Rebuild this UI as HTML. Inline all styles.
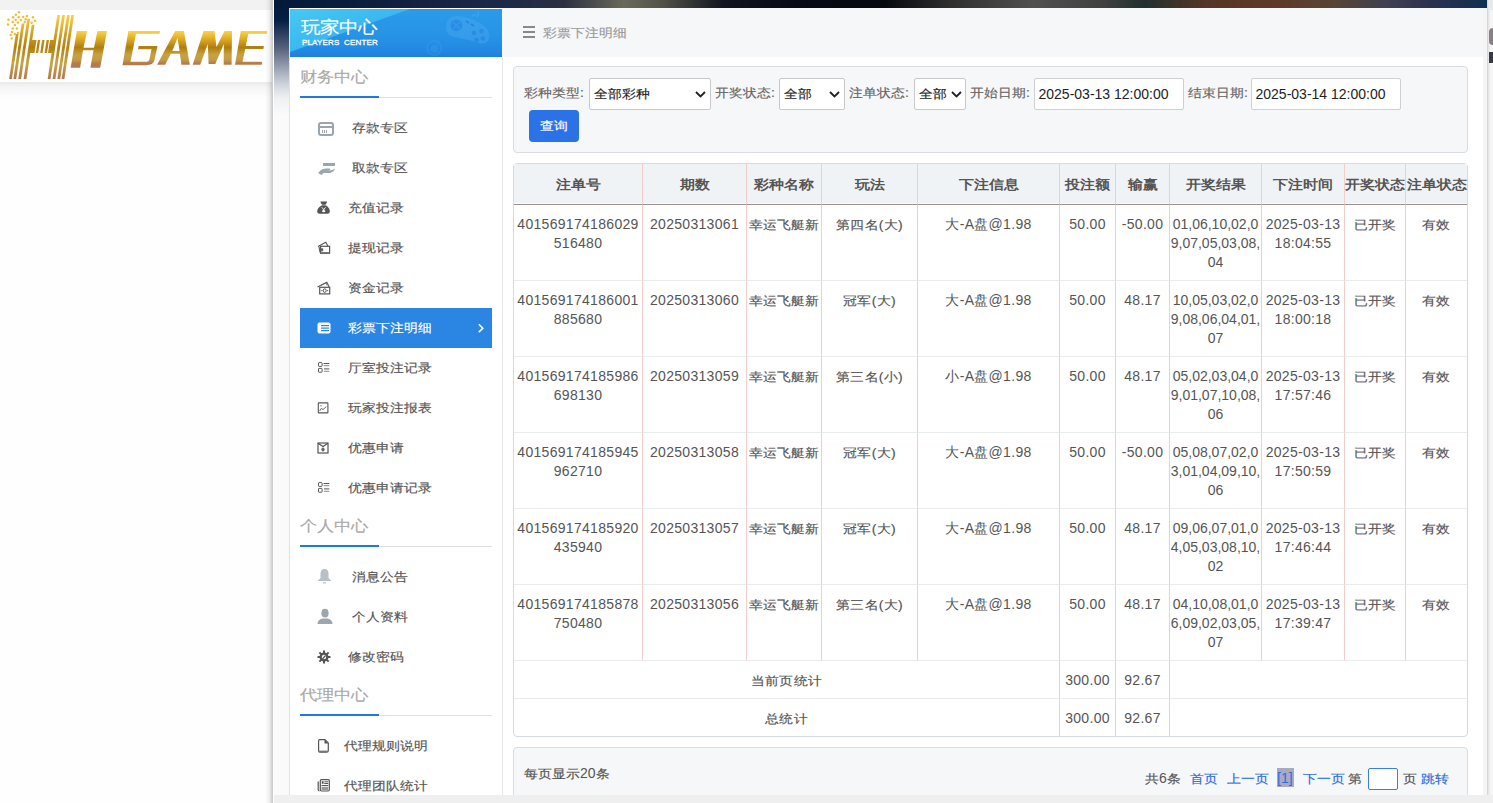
<!DOCTYPE html>
<html><head><meta charset="utf-8">
<style>
*{box-sizing:border-box;margin:0;padding:0}
html,body{width:1493px;height:803px;overflow:hidden}
body{position:relative;background:#fefefe;font-family:"Liberation Sans",sans-serif;font-size:14px;color:#555}
.abs{position:absolute}
#topgrey{left:0;top:0;width:272px;height:10px;background:#f2f2f2}
#logobar{left:0;top:10px;width:272px;height:72px;background:#fff}
#logoshadow{left:0;top:82px;width:272px;height:16px;background:linear-gradient(#eaeaea,#f6f6f6 35%,#fefefe)}
#vshadow{left:265px;top:0;width:8px;height:803px;background:linear-gradient(90deg,rgba(0,0,0,0),rgba(0,0,0,.05) 50%,rgba(0,0,0,.22))}
#vline{left:273px;top:0;width:1px;height:803px;background:#fff}
#frame{left:274px;top:0;width:1213px;height:795px;background:#fafafa}
#frametop{left:274px;top:0;width:1213px;height:140px;background:linear-gradient(#021a3a 0px,#041e44 20px,#56617c 48px,#a0a8b8 70px,#c8ccd5 82px,#dde0e5 90px,#eef0f2 98px,#fafafa 115px)}
#band{left:274px;top:0;width:1213px;height:8px;background:linear-gradient(90deg,#011a38 0px,#142040 130px,#1c2a48 230px,#2a3040 290px,#6a6a5a 350px,#505048 390px,#101520 450px,#050a15 530px,#06090f 610px,#303030 680px,#505050 760px,#404040 830px,#203030 870px,#553525 930px,#5e3a2a 1010px,#574535 1060px,#404050 1110px,#2a3050 1160px,#103050 1214px)}
#bottomstrip{left:274px;top:795px;width:1219px;height:8px;background:#efefef}
#sidebar{left:289px;top:8px;width:214px;height:787px;background:#fff;border-left:1px solid #e2e2e2;border-right:1px solid #e6e9ec}
#sbhead{left:290px;top:9px;width:212px;height:48px;background:linear-gradient(180deg,#2b9be9 0%,#2793e6 55%,#2187e3 90%,#1d7ede 100%)}
#main{left:503px;top:8px;width:984px;height:787px;background:#fff}
#crumb{left:502px;top:8px;width:981px;height:49px;background:#f6f7f9}
#rightstrip{left:1483px;top:8px;width:10px;height:795px;background:#f5f5f5}
#rshadow{left:1487px;top:0;width:3px;height:803px;background:linear-gradient(90deg,#d0d0d0,#e6e6e6,#f3f3f3)}

.sbt{position:absolute;left:300px;font-size:17px;line-height:20px;color:#a9a9a9;white-space:nowrap}
.sbu{position:absolute;left:300px;width:192px;height:2px;border-bottom:1px solid #e0e0e0}
.sbu i{position:absolute;left:0;top:0;width:79px;height:2px;background:#1f7ae0}
.mi{position:absolute;font-size:14px;line-height:20px;color:#555;white-space:nowrap}
.ic{position:absolute}
#active{left:300px;top:308px;width:192px;height:40px;background:#2a86e2}
#sbtitle{left:301px;top:18px;font-size:19px;line-height:20px;color:#fff;white-space:nowrap}
#sbsub{left:302px;top:38px;font-size:8px;-webkit-text-stroke:0.3px #fff;line-height:10px;color:#fff;letter-spacing:0.15px;white-space:pre}

#hamb{left:523px;top:26px;width:12px;height:12px}
#crumbtxt{left:543px;top:23px;font-size:14px;line-height:20px;color:#999;white-space:nowrap}
.panel{position:absolute;left:513px;width:955px;background:#f6f7f9;border:1px solid #d9dde2;border-radius:4px}
.lbl{position:absolute;top:83px;font-size:14px;line-height:20px;color:#666;white-space:nowrap}
.sel{position:absolute;top:78px;height:32px;background:#fff;border:1px solid #c9c9c9;border-radius:2px;font-size:14px;line-height:20px;color:#222;padding:4px 0 0 4px;white-space:nowrap}
.sel svg{position:absolute;right:4px;top:12px}
.inp{position:absolute;top:78px;height:32px;width:150px;background:#fff;border:1px solid #d0d0d0;border-radius:2px;font-size:14px;line-height:20px;color:#222;padding:5px 0 0 3.5px;white-space:nowrap}
#btn{left:529px;top:110px;width:50px;height:32px;background:#2a72e5;border-radius:4px;color:#fff;font-size:14px;line-height:30px;text-align:center}
#tbl{position:absolute;left:513px;top:163px;border-collapse:separate;border-spacing:0;table-layout:fixed;width:955px;border:1px solid #d5dae0;border-radius:4px}
#tbl td,#tbl th{border-right:1px solid #f3cccc;border-bottom:1px solid #e8ecec;text-align:center;vertical-align:top;padding:10px 0 0 0;font-size:14px;line-height:19px;color:#555;font-weight:normal;letter-spacing:0.3px;white-space:nowrap;overflow:hidden}
#tbl th{height:41px;background:#f0f3f6;font-weight:bold;font-size:15px;color:#555;border-bottom:1px solid #9e9090;padding:0;vertical-align:middle;letter-spacing:0;box-shadow:inset 0 -1px 0 #f8fafc}
#tbl tr.r td{height:76px}
#tbl tr.s td{height:38px;padding-top:10px}
#tbl td.l, #tbl th.l{border-right:none}
#tbl tr.last td{border-bottom:none;height:37px}
#pager{top:747px;height:60px}
.pg{position:absolute;top:768px;font-size:14px;line-height:20px;white-space:nowrap;color:#555}
.pg.b{color:#2a6ee0}

.cj{display:inline-block;transform:scaleY(0.87) translateY(0.5px);-webkit-text-stroke:0.18px currentColor}
.mi,.sbt,#crumbtxt,.lbl,#sbtitle{transform:scaleY(0.87);-webkit-text-stroke:0.18px currentColor}
#tbl th .cj{-webkit-text-stroke:0;transform:scaleY(0.87) translateY(-0.8px)}
</style></head><body>
<div id="topgrey" class="abs"></div>
<div id="logobar" class="abs"></div>
<div id="logoshadow" class="abs"></div>
<svg class="abs" style="left:0;top:0" width="272" height="90" viewBox="0 0 272 90">
<defs>
<linearGradient id="gg" x1="0" y1="0" x2="0" y2="1" gradientUnits="objectBoundingBox">
<stop offset="0" stop-color="#fcd44a"/><stop offset="0.5" stop-color="#b3800f"/><stop offset="0.72" stop-color="#c9a444"/><stop offset="0.88" stop-color="#c29b45"/><stop offset="1" stop-color="#b2744e"/>
</linearGradient>
<linearGradient id="gh" x1="0" y1="14" x2="0" y2="80" gradientUnits="userSpaceOnUse">
<stop offset="0" stop-color="#fcd44a"/><stop offset="0.5" stop-color="#b3800f"/><stop offset="0.75" stop-color="#c9a444"/><stop offset="1" stop-color="#b2744e"/>
</linearGradient>
<linearGradient id="gt" x1="0" y1="31" x2="0" y2="66" gradientUnits="userSpaceOnUse"><stop offset="0" stop-color="#fdd345"/><stop offset="0.2" stop-color="#e0b02c"/><stop offset="0.47" stop-color="#b07e0e"/><stop offset="0.68" stop-color="#c7a240"/><stop offset="0.82" stop-color="#c49c44"/><stop offset="0.92" stop-color="#b47c4c"/><stop offset="1" stop-color="#b5784f"/></linearGradient>
</defs>
<g fill="url(#gh)"><polygon points="9.1,79 11.9,79 18.6,34 15.8,34"/><polygon points="13.4,79 16.2,79 24.5,23.5 21.7,23.5"/><polygon points="18.3,79 21.1,79 30.1,18.7 27.3,18.7"/><polygon points="23.6,79 26.4,79 34.5,24.7 31.7,24.7"/><polygon points="47.7,79 50.5,79 60.1,15 57.3,15"/><polygon points="52.6,79 55.4,79 65.0,15 62.2,15"/><polygon points="57.4,79 60.2,79 69.8,15 67.0,15"/><polygon points="61.6,79 64.4,79 74.0,15 71.2,15"/><polygon points="29.5,53 34.5,53 36.5,40 31.4,40"/><polygon points="35.8,53 38.2,53 40.2,40 37.8,40"/><polygon points="40.2,53 42.6,53 44.6,40 42.2,40"/><polygon points="44.6,53 47.0,53 49.0,40 46.6,40"/><polygon points="48.0,53 53.0,53 55.0,40 50.0,40"/></g>
<g fill="#f0bf38"><circle cx="18.9" cy="12.2" r="1.25"/><circle cx="15.9" cy="14.7" r="1.25"/><circle cx="13.2" cy="17.2" r="1.25"/><circle cx="18.7" cy="17.2" r="1.25"/><circle cx="23.2" cy="17" r="1.25"/><circle cx="26.9" cy="16" r="1.25"/><circle cx="32.9" cy="17.2" r="1.25"/><circle cx="8.5" cy="19.7" r="1.25"/><circle cx="15.7" cy="19.7" r="1.25"/><circle cx="20.9" cy="20" r="1.25"/><circle cx="25.7" cy="19.2" r="1.25"/><circle cx="35.1" cy="20.7" r="1.25"/><circle cx="12.7" cy="22" r="1.25"/><circle cx="17.9" cy="22.4" r="1.25"/><circle cx="24.7" cy="22" r="1.25"/><circle cx="31.6" cy="22.7" r="1.25"/><circle cx="8" cy="24.4" r="1.25"/><circle cx="14.9" cy="25" r="1.25"/><circle cx="12.7" cy="28.4" r="1.25"/><circle cx="16.9" cy="28.4" r="1.25"/><circle cx="12" cy="31.9" r="1.25"/><circle cx="17.9" cy="32.9" r="1.25"/><circle cx="10.7" cy="35.1" r="1.25"/><circle cx="14.9" cy="33.9" r="1.25"/><circle cx="11.7" cy="38.6" r="1.25"/></g>
<g fill="url(#gt)">
<polygon points="76.8,31 87.1,31 83.5,47.8 94,47.8 97.4,31 107,31 100.2,67.7 90.4,67.7 93.5,50.2 83,50.2 80.1,67.7 70.7,67.7"/>
<path d="M128.4,31 L160,31 L159.5,33.8 L136,33.8 L130.5,61.8 L147,61.8 Q149,61.8 149.5,59 L151.5,49.3 L138,49.3 L138.6,46 L157.5,46 L154.5,60 Q153.5,65.2 146,65.2 L122.5,65.2 Z"/>
<path d="M175.1,31 L183.9,31 L189.8,64.8 L181.4,64.8 L179.9,53.8 L170.8,53.8 L165.1,64.8 L157.1,64.8 Z M172.3,51 L179.6,51 L177.5,38 Z"/>
<polygon points="203.6,31 214.5,31 216.5,47 224.5,31 232,31 231.6,64.8 223.7,64.8 223.8,44 215.3,64 208.6,64 207.8,44 200.2,64.8 192.7,64.8"/>
<polygon points="240.8,31 267.2,31 266.7,33.8 248.3,33.8 245.8,46 263.9,46 263.4,48.9 245.2,48.9 242.5,61.8 262.2,61.8 261.7,64.8 235,64.8"/>
</g>
</svg>

<div id="vshadow" class="abs"></div>
<div id="vline" class="abs"></div>
<div id="frame" class="abs"></div>
<div id="frametop" class="abs"></div>
<div id="band" class="abs"></div>
<div id="sidebar" class="abs"></div>
<div id="sbhead" class="abs"></div>

<svg class="abs" style="left:290px;top:9px" width="212" height="48" viewBox="290 9 212 48"><defs><linearGradient id="cy" x1="0" y1="0" x2="1" y2="1"><stop offset="0" stop-color="#45c9f3"/><stop offset="1" stop-color="#32a6eb"/></linearGradient></defs><polygon points="290,9 410,9 290,52" fill="url(#cy)"/>
<path d="M446 27 Q446 16 457 16 Q468 16 480 23 Q491 30 489 39 Q487 45 478 43 Q466 39 454 37 Q446 35 446 27 Z" fill="#4fb0f0" opacity="0.35"/>
<circle cx="456.4" cy="25.4" r="5.8" fill="#1f7fe0" opacity="0.55"/>
<path d="M453 22 L460 29 M460 22 L453 29" stroke="#3a9cec" stroke-width="1.5" opacity="0.7"/>
<path d="M466 21 L469 23 M471 24 L474 26" stroke="#1f7fe0" stroke-width="1.5"/>
<g fill="#1f7fe0" opacity="0.5"><circle cx="474" cy="33" r="2.3"/><circle cx="481.5" cy="31" r="2.3"/><circle cx="476.5" cy="40" r="2.3"/><circle cx="483" cy="38.5" r="2.3"/></g>
<path d="M472 17 Q473 13 476 16 Q479 18 478 11" stroke="#4fb0f0" stroke-width="1" fill="none" opacity="0.6"/>
<circle cx="434.3" cy="48" r="7" fill="none" stroke="#4fb0f0" stroke-width="1.5" opacity="0.25"/><circle cx="434.3" cy="49" r="4" fill="#4fb0f0" opacity="0.2"/>
</svg>
<div id="sbtitle" class="abs">玩家中心</div>
<div id="sbsub" class="abs">PLAYERS  CENTER</div>

<div class="sbt" style="top:68px">财务中心</div>
<div class="sbu" style="top:96px"><i></i></div>
<svg class="ic" style="left:318px;top:122px" width="16" height="14" viewBox="0 0 16 14"><rect x="1" y="1" width="14" height="12" rx="2" fill="none" stroke="#9aa5ad" stroke-width="2"/><rect x="1" y="4" width="14" height="2" fill="#9aa5ad"/><rect x="4" y="8" width="1" height="3" fill="#9aa5ad"/><rect x="6" y="8" width="1" height="3" fill="#9aa5ad"/><rect x="8" y="8" width="1" height="3" fill="#9aa5ad"/></svg>
<div class="mi" style="left:352px;top:118px">存款专区</div>
<svg class="ic" style="left:317px;top:162px" width="19" height="14" viewBox="0 0 19 14"><rect x="6" y="1" width="12" height="3" fill="#9aa5ad"/><path d="M1 11 L4 8 Q6 6.5 9 6.5 L13 6.5 Q14 7.5 12.5 8.3 L9 8.3 L13 8.6 Q16 8 18 6.5 Q17 10 13 11 L6.5 11 L4.5 13 Z" fill="#9aa5ad"/></svg>
<div class="mi" style="left:352px;top:158px">取款专区</div>
<svg class="ic" style="left:314px;top:198px" width="20" height="20" viewBox="314 198 20 20"><path d="M320.3 201.5 L327.2 201.5 L326 204.3 L321.5 204.3 Z" fill="#555"/><rect x="322" y="204.3" width="3.6" height="1.2" fill="#555"/><path d="M321.5 205.5 L326.2 205.5 Q329.8 208 329.8 211.5 Q329.8 213.8 327.5 213.8 L319.5 213.8 Q317.2 213.8 317.2 211.5 Q317.2 208 321.5 205.5 Z" fill="#555"/><path d="M321.8 207.3 L323.7 209.6 L325.6 207.3 M323.7 209.6 L323.7 212.3 M322.2 210.3 L325.2 210.3 M322.2 211.5 L325.2 211.5" stroke="#fff" stroke-width="0.9" fill="none"/></svg>
<div class="mi" style="left:348px;top:198px">充值记录</div>
<svg class="ic" style="left:314px;top:238px" width="20" height="20" viewBox="314 238 20 20"><path d="M318 246.5 L325.8 242.3 L328 246.3" stroke="#555" stroke-width="1.1" fill="none"/><path d="M319 246.5 L320 252.5" stroke="#555" stroke-width="1.1"/><rect x="320.6" y="246.3" width="9" height="7" fill="none" stroke="#555" stroke-width="1.2"/><rect x="321" y="248.3" width="2.2" height="3" fill="#666"/><rect x="320.6" y="252" width="9" height="1.5" fill="#777"/></svg>
<div class="mi" style="left:348px;top:238px">提现记录</div>
<svg class="ic" style="left:314px;top:278px" width="20" height="20" viewBox="314 278 20 20"><path d="M317.5 287 L326.8 282.3 L329.2 287" stroke="#555" stroke-width="1.1" fill="none"/><path d="M320 285.8 L326 283 L327 285.5" stroke="#666" stroke-width="0.8" fill="none"/><rect x="319.7" y="287.3" width="10" height="6.6" fill="none" stroke="#555" stroke-width="1.2"/><ellipse cx="324.7" cy="290.6" rx="1.5" ry="1.8" fill="none" stroke="#555" stroke-width="1"/><circle cx="321.8" cy="290.6" r="0.6" fill="#555"/><circle cx="327.6" cy="290.6" r="0.6" fill="#555"/></svg>
<div class="mi" style="left:348px;top:278px">资金记录</div>
<div id="active" class="abs"></div>
<svg class="ic" style="left:317px;top:322px" width="14" height="12" viewBox="0 0 14 12"><rect x="0.5" y="0.5" width="13" height="11" rx="2" fill="#fff"/><rect x="4" y="3" width="8" height="1.2" fill="#2a86e2"/><rect x="4" y="5.5" width="8" height="1.2" fill="#2a86e2"/><rect x="4" y="8" width="8" height="1.2" fill="#2a86e2"/></svg>
<div class="mi" style="left:348px;top:318px;color:#fff">彩票下注明细</div>
<svg class="ic" style="left:477px;top:323px" width="8" height="11" viewBox="0 0 8 11"><path d="M1.8 1.3 L5.8 5.2 L1.8 9.1" stroke="#fff" stroke-width="1.6" fill="none"/></svg>
<svg class="ic" style="left:317px;top:362px" width="13" height="12" viewBox="0 0 13 12"><rect x="1.5" y="0.6" width="3.6" height="3.8" rx="0.6" fill="none" stroke="#555" stroke-width="1"/><rect x="1.5" y="6.4" width="3.6" height="3.8" rx="0.6" fill="none" stroke="#555" stroke-width="1"/><path d="M6.6 1.5 H12.3 M7 6.9 H12.3" stroke="#555" stroke-width="1"/><path d="M6.6 3.7 H12.3 M7 9.3 H12.3" stroke="#888" stroke-width="1"/></svg>
<div class="mi" style="left:348px;top:358px">厅室投注记录</div>
<svg class="ic" style="left:317px;top:402px" width="12" height="12" viewBox="0 0 12 12"><rect x="1.3" y="0.9" width="9.6" height="10" rx="0.5" fill="none" stroke="#555" stroke-width="1.1"/><path d="M2.6 9 L4.3 6.4 L6 7.6 L9.3 4.6" stroke="#555" stroke-width="0.9" fill="none"/><circle cx="4" cy="3.8" r="0.7" fill="#777"/></svg>
<div class="mi" style="left:348px;top:398px">玩家投注报表</div>
<svg class="ic" style="left:317px;top:442px" width="12" height="12" viewBox="0 0 12 12"><rect x="1" y="1" width="10" height="10" fill="none" stroke="#555" stroke-width="1.2"/><path d="M1 1.2 L6 4.5 L11 1.2" stroke="#555" stroke-width="1.2" fill="none"/><ellipse cx="6" cy="7.5" rx="1.6" ry="2" fill="#666"/></svg>
<div class="mi" style="left:348px;top:438px">优惠申请</div>
<svg class="ic" style="left:317px;top:482px" width="13" height="12" viewBox="0 0 13 12"><rect x="1.5" y="0.6" width="3.6" height="3.8" rx="0.6" fill="none" stroke="#555" stroke-width="1"/><rect x="1.5" y="6.4" width="3.6" height="3.8" rx="0.6" fill="none" stroke="#555" stroke-width="1"/><path d="M6.6 1.5 H12.3 M7 6.9 H12.3" stroke="#555" stroke-width="1"/><path d="M6.6 3.7 H12.3 M7 9.3 H12.3" stroke="#888" stroke-width="1"/></svg>
<div class="mi" style="left:348px;top:478px">优惠申请记录</div>
<div class="sbt" style="top:517px">个人中心</div>
<div class="sbu" style="top:545px"><i></i></div>
<svg class="ic" style="left:317px;top:568px" width="15" height="16" viewBox="0 0 15 16"><path d="M7.5 1 Q11.5 1 11.5 6 L11.5 10 L14.5 13 L0.5 13 L3.5 10 L3.5 6 Q3.5 1 7.5 1 Z" fill="#b8c0c8"/><rect x="6" y="14.2" width="3" height="1.2" fill="#b8c0c8"/></svg>
<div class="mi" style="left:352px;top:567px">消息公告</div>
<svg class="ic" style="left:317px;top:608px" width="16" height="16" viewBox="0 0 16 16"><ellipse cx="8" cy="5.2" rx="3.6" ry="4.4" fill="#9ca6ae"/><path d="M0.5 16 Q0.5 11.5 5.5 10.5 L10.5 10.5 Q15.5 11.5 15.5 16 Z" fill="#9ca6ae"/></svg>
<div class="mi" style="left:352px;top:607px">个人资料</div>
<svg class="ic" style="left:317px;top:650px" width="14" height="14" viewBox="0 0 14 14"><g fill="#555"><circle cx="7" cy="7" r="4.5"/><rect x="6" y="0.5" width="2" height="13"/><rect x="0.5" y="6" width="13" height="2"/><rect x="6" y="0.5" width="2" height="13" transform="rotate(45 7 7)"/><rect x="6" y="0.5" width="2" height="13" transform="rotate(-45 7 7)"/></g><circle cx="7" cy="7" r="2.2" fill="#fff"/><path d="M5.5 9 L8.5 5.5" stroke="#555" stroke-width="1.2"/></svg>
<div class="mi" style="left:348px;top:647px">修改密码</div>
<div class="sbt" style="top:686px">代理中心</div>
<div class="sbu" style="top:714px"><i></i></div>
<svg class="ic" style="left:314px;top:736px" width="20" height="20" viewBox="314 736 20 20"><path d="M319.8 739.6 L325 739.6 L328.3 742.9 L328.3 750.5 Q328.3 752.2 326.6 752.2 L319.8 752.2 Q318.6 752.2 318.6 750.8 L318.6 741 Q318.6 739.6 319.8 739.6 Z" fill="none" stroke="#555" stroke-width="1.2"/><path d="M324.5 739.6 L328.3 743.4 L324.5 743.4 Z" fill="#555"/><rect x="319.2" y="750.6" width="8.6" height="1.4" fill="#777"/></svg>
<div class="mi" style="left:344px;top:736px">代理规则说明</div>
<svg class="ic" style="left:314px;top:776px" width="20" height="20" viewBox="314 776 20 20"><rect x="320.3" y="779.6" width="9" height="11.4" rx="1.2" fill="none" stroke="#555" stroke-width="1.2"/><path d="M318.2 781.5 L318.2 789.8 Q318.2 791 319.5 791" stroke="#555" stroke-width="1.2" fill="none"/><rect x="321.8" y="781.2" width="1.8" height="2.6" fill="#555"/><rect x="324.3" y="781.3" width="3.8" height="1" fill="#555"/><rect x="324.3" y="783" width="3.8" height="1" fill="#555"/><rect x="321.5" y="785" width="6.6" height="1" fill="#555"/><rect x="321.5" y="786.8" width="6.6" height="3.4" fill="#999"/></svg>
<div class="mi" style="left:344px;top:776px">代理团队统计</div>
<div id="main" class="abs"></div>
<div id="crumb" class="abs"></div>

<svg id="hamb" class="abs" viewBox="0 0 12 12"><rect x="0" y="0" width="12" height="2" fill="#888"/><rect x="0" y="5" width="12" height="2" fill="#888"/><rect x="0" y="10" width="12" height="2" fill="#888"/></svg>
<div id="crumbtxt" class="abs">彩票下注明细</div>
<div class="panel" style="top:66px;height:87px"></div>
<div class="lbl" style="left:524px">彩种类型:</div>
<div class="sel" style="left:589px;width:122px"><span class="cj">全部彩种</span><svg width="11" height="7" viewBox="0 0 11 7"><path d="M1 1 L5.5 5.5 L10 1" stroke="#222" stroke-width="1.8" fill="none"/></svg></div>
<div class="lbl" style="left:715px">开奖状态:</div>
<div class="sel" style="left:779px;width:66px"><span class="cj">全部</span><svg width="11" height="7" viewBox="0 0 11 7"><path d="M1 1 L5.5 5.5 L10 1" stroke="#222" stroke-width="1.8" fill="none"/></svg></div>
<div class="lbl" style="left:849px">注单状态:</div>
<div class="sel" style="left:914px;width:52px"><span class="cj">全部</span><svg style="right:3px" width="11" height="7" viewBox="0 0 11 7"><path d="M1 1 L5.5 5.5 L10 1" stroke="#222" stroke-width="1.8" fill="none"/></svg></div>
<div class="lbl" style="left:970px">开始日期:</div>
<div class="inp" style="left:1034px">2025-03-13 12:00:00</div>
<div class="lbl" style="left:1188px">结束日期:</div>
<div class="inp" style="left:1251px">2025-03-14 12:00:00</div>
<div id="btn" class="abs"><span class="cj">查询</span></div>
<table id="tbl">
<colgroup><col style="width:129px"><col style="width:104px"><col style="width:75px"><col style="width:96px"><col style="width:142px"><col style="width:56px"><col style="width:54px"><col style="width:92px"><col style="width:83px"><col style="width:61px"><col style="width:61px"></colgroup>
<tr><th><span class="cj">注单号</span></th><th><span class="cj">期数</span></th><th><span class="cj">彩种名称</span></th><th><span class="cj">玩法</span></th><th><span class="cj">下注信息</span></th><th><span class="cj">投注额</span></th><th><span class="cj">输赢</span></th><th><span class="cj">开奖结果</span></th><th><span class="cj">下注时间</span></th><th><span class="cj">开奖状态</span></th><th class="l"><span class="cj">注单状态</span></th></tr>
<tr class="r"><td>401569174186029<br>516480</td><td>20250313061</td><td style="letter-spacing:0"><span class="cj">幸运飞艇新</span></td><td><span class="cj">第四名(大)</span></td><td>大-A盘@1.98</td><td>50.00</td><td>-50.00</td><td style="letter-spacing:0">01,06,10,02,0<br>9,07,05,03,08,<br>04</td><td>2025-03-13<br>18:04:55</td><td><span class="cj">已开奖</span></td><td class="l"><span class="cj">有效</span></td></tr>
<tr class="r"><td>401569174186001<br>885680</td><td>20250313060</td><td style="letter-spacing:0"><span class="cj">幸运飞艇新</span></td><td><span class="cj">冠军(大)</span></td><td>大-A盘@1.98</td><td>50.00</td><td>48.17</td><td style="letter-spacing:0">10,05,03,02,0<br>9,08,06,04,01,<br>07</td><td>2025-03-13<br>18:00:18</td><td><span class="cj">已开奖</span></td><td class="l"><span class="cj">有效</span></td></tr>
<tr class="r"><td>401569174185986<br>698130</td><td>20250313059</td><td style="letter-spacing:0"><span class="cj">幸运飞艇新</span></td><td><span class="cj">第三名(小)</span></td><td>小-A盘@1.98</td><td>50.00</td><td>48.17</td><td style="letter-spacing:0">05,02,03,04,0<br>9,01,07,10,08,<br>06</td><td>2025-03-13<br>17:57:46</td><td><span class="cj">已开奖</span></td><td class="l"><span class="cj">有效</span></td></tr>
<tr class="r"><td>401569174185945<br>962710</td><td>20250313058</td><td style="letter-spacing:0"><span class="cj">幸运飞艇新</span></td><td><span class="cj">冠军(大)</span></td><td>大-A盘@1.98</td><td>50.00</td><td>-50.00</td><td style="letter-spacing:0">05,08,07,02,0<br>3,01,04,09,10,<br>06</td><td>2025-03-13<br>17:50:59</td><td><span class="cj">已开奖</span></td><td class="l"><span class="cj">有效</span></td></tr>
<tr class="r"><td>401569174185920<br>435940</td><td>20250313057</td><td style="letter-spacing:0"><span class="cj">幸运飞艇新</span></td><td><span class="cj">冠军(大)</span></td><td>大-A盘@1.98</td><td>50.00</td><td>48.17</td><td style="letter-spacing:0">09,06,07,01,0<br>4,05,03,08,10,<br>02</td><td>2025-03-13<br>17:46:44</td><td><span class="cj">已开奖</span></td><td class="l"><span class="cj">有效</span></td></tr>
<tr class="r"><td>401569174185878<br>750480</td><td>20250313056</td><td style="letter-spacing:0"><span class="cj">幸运飞艇新</span></td><td><span class="cj">第三名(大)</span></td><td>大-A盘@1.98</td><td>50.00</td><td>48.17</td><td style="letter-spacing:0">04,10,08,01,0<br>6,09,02,03,05,<br>07</td><td>2025-03-13<br>17:39:47</td><td><span class="cj">已开奖</span></td><td class="l"><span class="cj">有效</span></td></tr>

<tr class="s"><td colspan="5"><span class="cj">当前页统计</span></td><td>300.00</td><td>92.67</td><td colspan="4" class="l"></td></tr>
<tr class="s last"><td colspan="5"><span class="cj">总统计</span></td><td>300.00</td><td>92.67</td><td colspan="4" class="l"></td></tr>
</table>
<div id="pager" class="panel"></div>
<div class="pg" style="left:524px;top:763px"><span class="cj">每页显示</span>20<span class="cj">条</span></div>
<div class="pg" style="left:1145px"><span class="cj">共</span>6<span class="cj">条</span></div>
<div class="pg b" style="left:1190px"><span class="cj">首页</span></div>
<div class="pg b" style="left:1227px"><span class="cj">上一页</span></div>
<div class="abs" style="left:1277px;top:768px;width:17px;height:19px;background:#a9aac2"></div>
<div class="pg b" style="left:1277px">[1]</div>
<div class="pg b" style="left:1303px"><span class="cj">下一页</span></div>
<div class="pg" style="left:1348px"><span class="cj">第</span></div>
<div class="abs" style="left:1368px;top:768px;width:30px;height:22px;background:#fff;border:1px solid #3a7fe0;border-radius:2px"></div>
<div class="pg" style="left:1403px"><span class="cj">页</span></div>
<div class="pg b" style="left:1421px"><span class="cj">跳转</span></div>
<div id="rightstrip" class="abs"></div>
<div id="rshadow" class="abs"></div>
<div class="abs" style="left:1490px;top:0;width:3px;height:10px;background:#e8e8e8"></div>
<div class="abs" style="left:1489px;top:28px;width:4px;height:17px;background:#8a7f85;border-radius:4px 0 0 4px"></div>
<div class="abs" style="left:1489px;top:52px;width:4px;height:11px;background:#3a3a4a"></div>
<div id="bottomstrip" class="abs"></div>
</body></html>
